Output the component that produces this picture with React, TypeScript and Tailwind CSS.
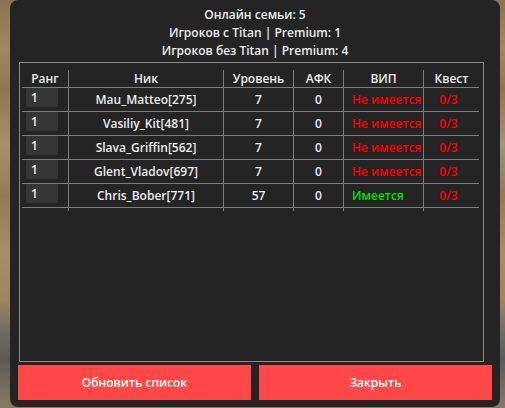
import React from "react";

type Row = {
  rank: number;
  nick: string;
  level: number;
  afk: number;
  vip: boolean;
  quest: string;
};

const rows: Row[] = [
  { rank: 1, nick: "Mau_Matteo[275]", level: 7, afk: 0, vip: false, quest: "0/3" },
  { rank: 1, nick: "Vasiliy_Kit[481]", level: 7, afk: 0, vip: false, quest: "0/3" },
  { rank: 1, nick: "Slava_Griffin[562]", level: 7, afk: 0, vip: false, quest: "0/3" },
  { rank: 1, nick: "Glent_Vladov[697]", level: 7, afk: 0, vip: false, quest: "0/3" },
  { rank: 1, nick: "Chris_Bober[771]", level: 57, afk: 0, vip: true, quest: "0/3" },
];

// ширины колонок: Ранг | Ник | Уровень | АФК | ВИП | Квест
const grid = "grid grid-cols-[46px_155px_70px_50px_80px_56px]";
const sep = "border-l border-[#7d7d7d]";

export default function App() {
  return (
    <div
      className="w-[505px] h-[408px] overflow-hidden flex bg-[linear-gradient(180deg,#8c7352_0%,#a08767_12%,#8e7656_22%,#a8916f_35%,#927a5a_48%,#a48c6c_62%,#9c8464_74%,#6e6a62_82%,#5c5a56_88%,#8a7a62_100%)]"
      style={{ fontFamily: '"Open Sans", "Noto Sans", sans-serif' }}
    >
      <div className="ml-[10px] w-[490px] h-[407px] bg-[#242424] rounded-[8px] px-[8px] pt-[6px] pb-[7px] flex flex-col text-[#ececec]">
        {/* шапка */}
        <div className="flex flex-col items-center text-[12px] font-semibold leading-[18px]">
          <div>Онлайн семьи: 5</div>
          <div>Игроков с Titan | Premium: 1</div>
          <div>Игроков без Titan | Premium: 4</div>
        </div>

        {/* таблица */}
        <div className="mt-[2px] ml-[1px] w-[465px] h-[300px] border border-[#8c8c8c] pl-[2px] pr-[4px] pt-[7px]">
          <div className={`${grid} h-[18px] border-b border-[#7d7d7d] text-[12px] font-semibold leading-[17px] text-center`}>
            <div>Ранг</div>
            <div className={sep}>Ник</div>
            <div className={sep}>Уровень</div>
            <div className={sep}>АФК</div>
            <div className={sep}>ВИП</div>
            <div className={sep}>Квест</div>
          </div>
          {rows.map((r) => (
            <div
              key={r.nick}
              className={`${grid} h-[24px] border-b border-[#7d7d7d] text-[12px] font-semibold leading-[23px]`}
            >
              <div className="pl-[4px]">
                <div className="w-[32px] h-[19px] bg-[#363636] pl-[5px] leading-[19px] text-[12px]">
                  {r.rank}
                </div>
              </div>
              <div className={`${sep} text-center`}>{r.nick}</div>
              <div className={`${sep} text-center`}>{r.level}</div>
              <div className={`${sep} text-center`}>{r.afk}</div>
              <div
                className={`${sep} pl-[8px] ${
                  r.vip ? "text-[#00e000]" : "text-[#ff0000]"
                }`}
              >
                {r.vip ? "Имеется" : "Не имеется"}
              </div>
              <div className={`${sep} text-center text-[#ff0000] pr-[6px]`}>
                {r.quest}
              </div>
            </div>
          ))}
          <div className={`${grid} h-[3px]`}>
            <div />
            <div className={sep} />
            <div className={sep} />
            <div className={sep} />
            <div className={sep} />
            <div className={sep} />
          </div>
        </div>

        {/* кнопки */}
        <div className="mt-[3px] flex gap-[8px]">
          <button className="w-[233px] h-[35px] bg-[#ff4747] text-white text-[12px] font-semibold">
            Обновить список
          </button>
          <button className="w-[233px] h-[35px] bg-[#ff4747] text-white text-[12px] font-semibold">
            Закрыть
          </button>
        </div>
      </div>
    </div>
  );
}
